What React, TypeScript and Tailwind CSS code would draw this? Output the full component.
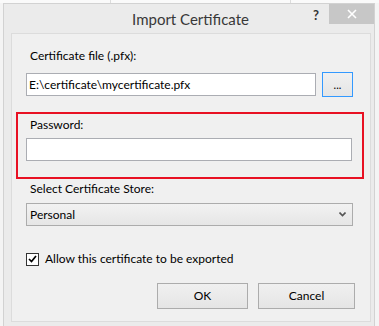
import React from 'react';

const font = { fontFamily: 'Lato, "Noto Sans", sans-serif' };

function Field({ value }: { value?: string }) {
  return (
    <div className="h-[23px] border border-[#abadb3] bg-white pl-[2px] text-[12px] leading-[21px] text-black">
      {value}
    </div>
  );
}

function DialogButton({ label, width }: { label: string; width: string }) {
  return (
    <button
      className={`${width} h-[26px] border border-[#acacac] bg-gradient-to-b from-[#f0f0f0] to-[#e5e5e5] text-[12px] text-black`}
    >
      {label}
    </button>
  );
}

export default function App() {
  return (
    <div className="w-[379px] h-[326px] overflow-hidden bg-[#f4f4f4]" style={font}>
      {/* bit of the window behind */}
      <div className="h-[3px] flex bg-[#fafafa]">
        <div className="w-[111px] border-r border-[#dcdcdc]" />
        <div className="w-[180px] border-r border-[#dcdcdc]" />
      </div>

      <div className="ml-[3px] w-[372px] h-[330px] border border-[#d2d2d2] bg-[#ebebeb]">
        {/* title bar */}
        <div className="h-[29px] flex items-start">
          <div className="flex-1 text-center pl-[64px] pt-[5px] text-[15px] leading-[20px] text-[#383838]">
            Import Certificate
          </div>
          <div className="w-[16px] pt-[2px] text-[13px] font-bold leading-[18px] text-[#333333]">?</div>
          <div className="w-[45px] h-[20px] bg-[#c7c7c7] flex items-center justify-center">
            <svg width="10" height="10" viewBox="0 0 10 10">
              <path d="M1 1 L9 9 M9 1 L1 9" stroke="#ffffff" strokeWidth="1.6" />
            </svg>
          </div>
        </div>

        {/* content panel */}
        <div className="ml-[7px] w-[360px] h-[289px] border border-[#dcdcdc] bg-[#f0f0f0] text-[12px] text-black">
          <div className="pl-[18px] pt-[14px] leading-[16px]">Certificate file (.pfx):</div>

          <div className="mt-[8px] flex items-start pl-[14px]">
            <div className="mt-[1px] w-[290px]">
              <Field value="E:\certificate\mycertificate.pfx" />
            </div>
            <button className="ml-[6px] w-[31px] h-[25px] border border-[#3399ff] bg-gradient-to-b from-[#f0f0f0] to-[#e5e5e5] text-[11px] leading-[14px] text-black">
              ...
            </button>
          </div>

          {/* highlighted password group */}
          <div className="mt-[15px] ml-[4px] w-[348px] h-[67px] border-2 border-[#e81123] pl-[8px]">
            <div className="pl-[4px] pt-[3px] leading-[16px]">Password:</div>
            <div className="mt-[5px] w-[326px]">
              <Field />
            </div>
          </div>

          <div className="pl-[18px] pt-[2px] leading-[16px]">Select Certificate Store:</div>

          <div className="mt-[6px] ml-[14px] w-[327px] h-[23px] border border-[#acacac] bg-gradient-to-b from-[#f2f2f2] to-[#e6e6e6] flex items-center justify-between pl-[3px] pr-[6px] leading-[21px]">
            <span>Personal</span>
            <svg width="7" height="5" viewBox="0 0 7 5">
              <path d="M0.5 0.5 L3.5 3.5 L6.5 0.5" stroke="#555555" strokeWidth="1.6" fill="none" />
            </svg>
          </div>

          <label className="mt-[25px] ml-[14px] flex items-center gap-[6px] leading-[16px]">
            <span className="w-[13px] h-[13px] border border-[#333333] bg-white flex items-center justify-center">
              <svg width="9" height="8" viewBox="0 0 9 8">
                <path d="M1 4 L3.5 6.5 L8 1" stroke="#000000" strokeWidth="1.7" fill="none" />
              </svg>
            </span>
            Allow this certificate to be exported
          </label>

          <div className="mt-[16px] flex gap-[10px] pl-[145px]">
            <DialogButton label="OK" width="w-[91px]" />
            <DialogButton label="Cancel" width="w-[97px]" />
          </div>
        </div>
      </div>
    </div>
  );
}
